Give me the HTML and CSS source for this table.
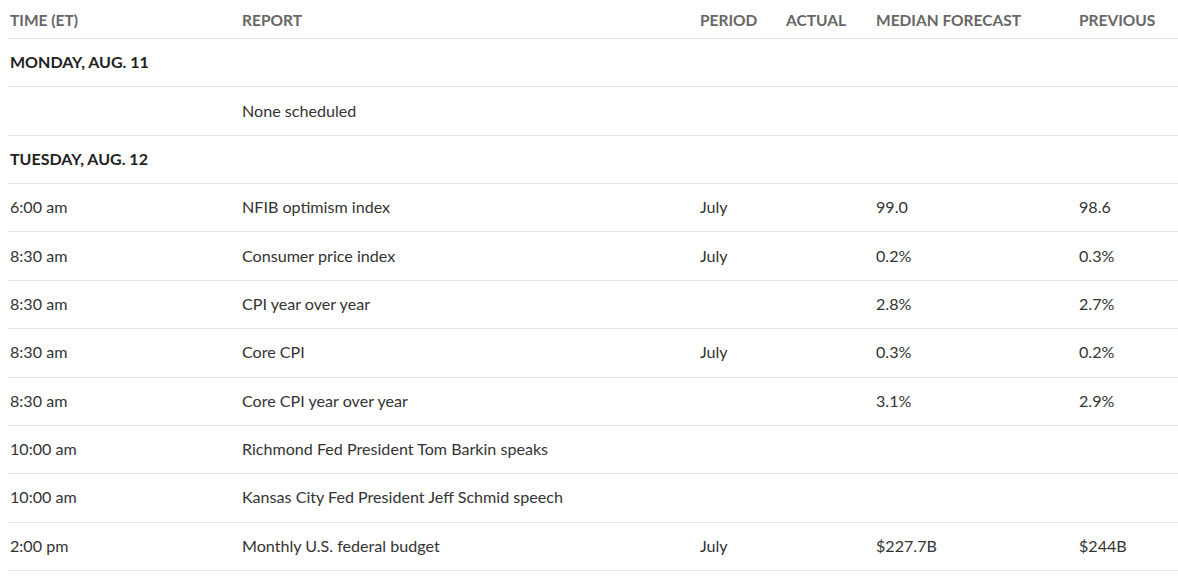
FILE: index.html
```html
<!DOCTYPE html>
<html>
<head>
<meta charset="utf-8">
<link rel="stylesheet" href="styles.css">
</head>
<body>
<div class="cal">
  <div class="row head">
    <div>TIME (ET)</div><div>REPORT</div><div>PERIOD</div><div>ACTUAL</div><div>MEDIAN FORECAST</div><div>PREVIOUS</div>
  </div>
  <div class="row day"><div>MONDAY, AUG. 11</div></div>
  <div class="row"><div></div><div>None scheduled</div><div></div><div></div><div></div><div></div></div>
  <div class="row day"><div>TUESDAY, AUG. 12</div></div>
  <div class="row"><div>6:00 am</div><div>NFIB optimism index</div><div>July</div><div></div><div>99.0</div><div>98.6</div></div>
  <div class="row"><div>8:30 am</div><div>Consumer price index</div><div>July</div><div></div><div>0.2%</div><div>0.3%</div></div>
  <div class="row"><div>8:30 am</div><div>CPI year over year</div><div></div><div></div><div>2.8%</div><div>2.7%</div></div>
  <div class="row"><div>8:30 am</div><div>Core CPI</div><div>July</div><div></div><div>0.3%</div><div>0.2%</div></div>
  <div class="row"><div>8:30 am</div><div>Core CPI year over year</div><div></div><div></div><div>3.1%</div><div>2.9%</div></div>
  <div class="row"><div>10:00 am</div><div>Richmond Fed President Tom Barkin speaks</div><div></div><div></div><div></div><div></div></div>
  <div class="row"><div>10:00 am</div><div>Kansas City Fed President Jeff Schmid speech</div><div></div><div></div><div></div><div></div></div>
  <div class="row"><div>2:00 pm</div><div>Monthly U.S. federal budget</div><div>July</div><div></div><div>$227.7B</div><div>$244B</div></div>
</div>
</body>
</html>
```

FILE: styles.css
```css
html, body { margin: 0; padding: 0; background: #fff; }
body { font-family: Lato, "Open Sans", sans-serif; color: #333; }
.cal { margin-left: 8px; }
.row {
  display: grid;
  grid-template-columns: 232px 458px 86px 90px 203px 1fr;
  align-items: center;
  height: 48.36px;
  box-sizing: border-box;
  border-bottom: 1px solid #e3e3e3;
  padding-left: 2px;
  padding-bottom: 2px;
  font-size: 16.1px;
}
.row.head {
  height: 39px;
  font-size: 15.5px;
  font-weight: 700;
  color: #666;
  padding-top: 1px;
  padding-bottom: 0;
}
.row.day { font-weight: 700; color: #222; font-size: 16px; }
.row.day > div { grid-column: 1 / -1; }
```
